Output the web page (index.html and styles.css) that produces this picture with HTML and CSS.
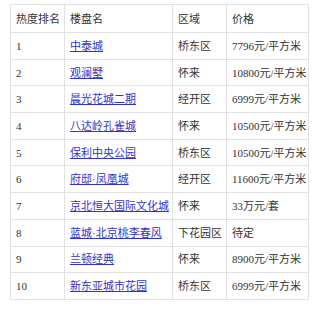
FILE: index.html
```html
<!DOCTYPE html>
<html>
<head>
<meta charset="utf-8">
<link rel="stylesheet" href="styles.css">
</head>
<body>
<table class="rank">
  <colgroup>
    <col class="c1"><col class="c2"><col class="c3"><col class="c4">
  </colgroup>
  <thead>
    <tr><th>热度排名</th><th>楼盘名</th><th>区域</th><th>价格</th></tr>
  </thead>
  <tbody>
    <tr><td>1</td><td><a href="#">中泰城</a></td><td>桥东区</td><td>7796元/平方米</td></tr>
    <tr><td>2</td><td><a href="#">观澜墅</a></td><td>怀来</td><td>10800元/平方米</td></tr>
    <tr><td>3</td><td><a href="#">晨光花城二期</a></td><td>经开区</td><td>6999元/平方米</td></tr>
    <tr><td>4</td><td><a href="#">八达岭孔雀城</a></td><td>怀来</td><td>10500元/平方米</td></tr>
    <tr><td>5</td><td><a href="#">保利中央公园</a></td><td>桥东区</td><td>10500元/平方米</td></tr>
    <tr><td>6</td><td><a href="#">府邸·凤凰城</a></td><td>经开区</td><td>11600元/平方米</td></tr>
    <tr><td>7</td><td><a href="#">京北恒大国际文化城</a></td><td>怀来</td><td>33万元/套</td></tr>
    <tr><td>8</td><td><a href="#">蓝城·北京桃李春风</a></td><td>下花园区</td><td>待定</td></tr>
    <tr><td>9</td><td><a href="#">兰顿经典</a></td><td>怀来</td><td>8900元/平方米</td></tr>
    <tr><td>10</td><td><a href="#">新东亚城市花园</a></td><td>桥东区</td><td>6999元/平方米</td></tr>
  </tbody>
</table>
</body>
</html>
```

FILE: styles.css
```css
html, body {
  margin: 0;
  padding: 0;
  background: #fff;
}
body {
  padding: 4px 0 0 10px;
  font-family: "Liberation Serif", "Noto Sans CJK SC", serif;
  font-size: 11px;
  color: #333;
}
.rank {
  border-collapse: collapse;
  table-layout: fixed;
  width: 298px;
}
.c1 { width: 54px; }
.c2 { width: 108px; }
.c3 { width: 54px; }
.c4 { width: 82px; }
.rank th, .rank td {
  border: 1px solid #e2e2e2;
  padding: 0 0 0 5px;
  text-align: left;
  font-weight: normal;
  white-space: nowrap;
  overflow: hidden;
  height: 25.7px;
  line-height: 14px;
}
.rank th {
  height: 27px;
}
.rank a {
  color: #3333cc;
  text-decoration: underline;
}
```
